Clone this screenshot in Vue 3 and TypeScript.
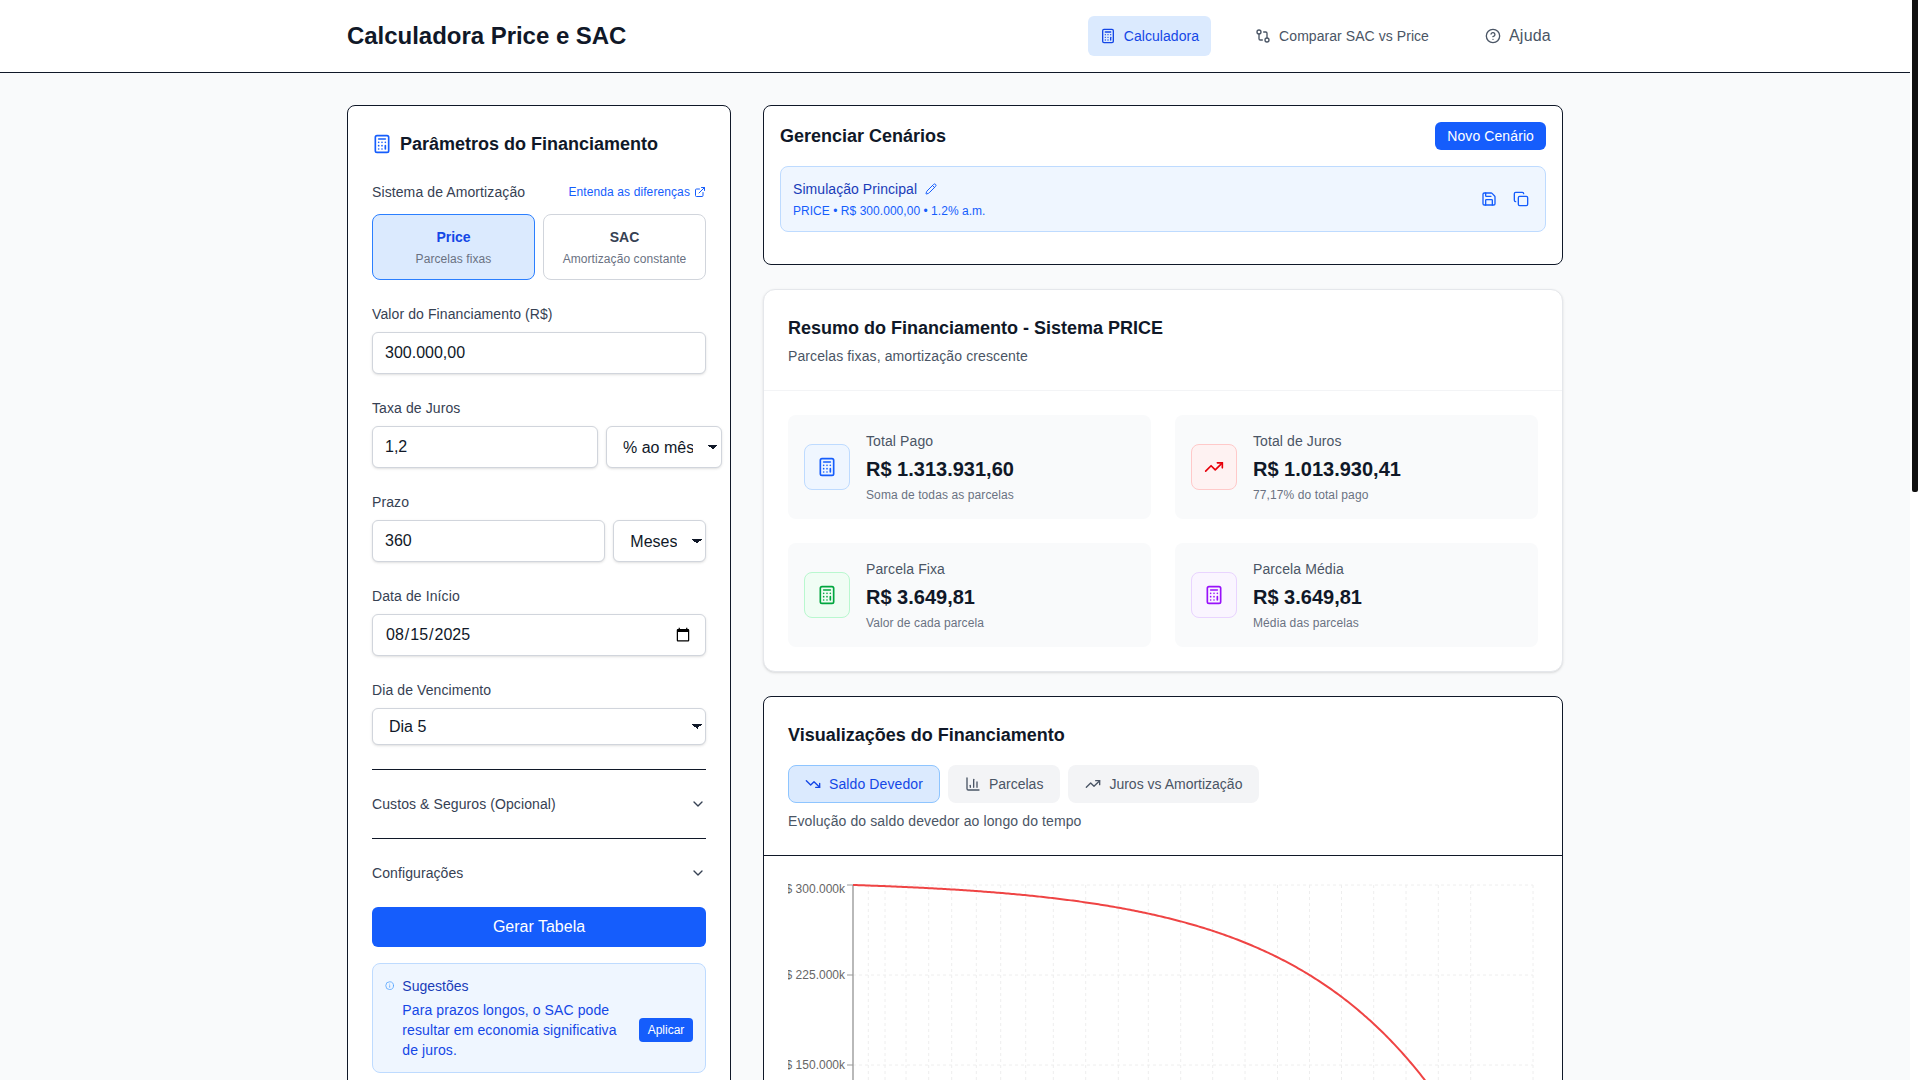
<script setup lang="ts">
import { h } from 'vue'

const icons: Record<string, string[]> = {
  calculator: [
    'M6 2h12a2 2 0 0 1 2 2v16a2 2 0 0 1-2 2H6a2 2 0 0 1-2-2V4a2 2 0 0 1 2-2z',
    'M8 6h8', 'M16 14v4', 'M16 10h.01', 'M12 10h.01', 'M8 10h.01', 'M12 14h.01', 'M8 14h.01', 'M12 18h.01', 'M8 18h.01',
  ],
  compare: [
    'M21 18a3 3 0 1 1-6 0a3 3 0 1 1 6 0z', 'M9 6a3 3 0 1 1-6 0a3 3 0 1 1 6 0z',
    'M13 6h3a2 2 0 0 1 2 2v7', 'M11 18H8a2 2 0 0 1-2-2V9',
  ],
  help: ['M22 12a10 10 0 1 1-20 0a10 10 0 1 1 20 0z', 'M9.09 9a3 3 0 0 1 5.83 1c0 2-3 3-3 3', 'M12 17h.01'],
  external: ['M15 3h6v6', 'M10 14 21 3', 'M18 13v6a2 2 0 0 1-2 2H5a2 2 0 0 1-2-2V8a2 2 0 0 1 2-2h6'],
  chevron: ['m6 9 6 6 6-6'],
  info: ['M22 12a10 10 0 1 1-20 0a10 10 0 1 1 20 0z', 'M12 16v-4', 'M12 8h.01'],
  pencil: [
    'M21.174 6.812a1 1 0 0 0-3.986-3.987L3.842 16.174a2 2 0 0 0-.5.83l-1.321 4.352a.5.5 0 0 0 .623.622l4.353-1.32a2 2 0 0 0 .83-.497z',
    'm15 5 4 4',
  ],
  save: [
    'M15.2 3a2 2 0 0 1 1.4.6l3.8 3.8a2 2 0 0 1 .6 1.4V19a2 2 0 0 1-2 2H5a2 2 0 0 1-2-2V5a2 2 0 0 1 2-2z',
    'M17 21v-7a1 1 0 0 0-1-1H8a1 1 0 0 0-1 1v7', 'M7 3v4a1 1 0 0 0 1 1h7',
  ],
  copy: [
    'M10 8h10a2 2 0 0 1 2 2v10a2 2 0 0 1-2 2H10a2 2 0 0 1-2-2V10a2 2 0 0 1 2-2z',
    'M4 16c-1.1 0-2-.9-2-2V4c0-1.1.9-2 2-2h10c1.1 0 2 .9 2 2',
  ],
  up: ['M22 7 13.5 15.5 8.5 10.5 2 17', 'M16 7h6v6'],
  down: ['M22 17 13.5 8.5 8.5 13.5 2 7', 'M16 17h6v-6'],
  bars: ['M3 3v16a2 2 0 0 0 2 2h16', 'M18 17V9', 'M13 17V5', 'M8 17v-3'],
}

const Icon = (props: { name: string; size?: number }) =>
  h(
    'svg',
    {
      width: props.size ?? 16,
      height: props.size ?? 16,
      viewBox: '0 0 24 24',
      fill: 'none',
      stroke: 'currentColor',
      'stroke-width': 2,
      'stroke-linecap': 'round',
      'stroke-linejoin': 'round',
      style: { flex: 'none', display: 'block' },
    },
    icons[props.name].map((d) => h('path', { d })),
  )
Icon.props = ['name', 'size']

const navItems = [
  { label: 'Calculadora', icon: 'calculator', active: true },
  { label: 'Comparar SAC vs Price', icon: 'compare', active: false },
  { label: 'Ajuda', icon: 'help', active: false, large: true },
]

const stats = [
  { label: 'Total Pago', value: 'R$ 1.313.931,60', note: 'Soma de todas as parcelas', icon: 'calculator', tone: 'blue' },
  { label: 'Total de Juros', value: 'R$ 1.013.930,41', note: '77,17% do total pago', icon: 'up', tone: 'red' },
  { label: 'Parcela Fixa', value: 'R$ 3.649,81', note: 'Valor de cada parcela', icon: 'calculator', tone: 'green' },
  { label: 'Parcela Média', value: 'R$ 3.649,81', note: 'Média das parcelas', icon: 'calculator', tone: 'purple' },
]

const tabs = [
  { label: 'Saldo Devedor', icon: 'down', active: true },
  { label: 'Parcelas', icon: 'bars', active: false },
  { label: 'Juros vs Amortização', icon: 'up', active: false },
]

// Chart geometry: the svg starts at the card's inner left edge.
const plotLeft = 65
const plotRight = 745
const plotTop = 5
const plotBottom = 365

const yTicks = [
  { label: 'R$ 300.000k', y: 5, base: 13 },
  { label: 'R$ 225.000k', y: 95, base: 99 },
  { label: 'R$ 150.000k', y: 185, base: 189 },
  { label: 'R$ 75.000k', y: 275, base: 279 },
  { label: 'R$ 0k', y: 365, base: 369 },
]

const gridX = [
  868.3, 885, 906, 928.7, 951.7, 976.3, 1000.7, 1025.7, 1053.3, 1085.7, 1118.3, 1148.3, 1180.7, 1212.7, 1245, 1277.5,
  1309.5, 1341.5, 1373.7, 1406, 1438.3, 1470.7, 1533,
].map((x) => x - 788)

const rate = 0.012
const months = 360
const growth = Math.pow(1 + rate, months)
const curve = Array.from({ length: months + 1 }, (_, n) => {
  const balance = (300000 * (growth - Math.pow(1 + rate, n))) / (growth - 1)
  const x = plotLeft + n * 1.847
  const y = plotBottom - (balance / 300000) * (plotBottom - plotTop)
  return `${x.toFixed(2)},${y.toFixed(2)}`
}).join(' ')
</script>

<template>
  <div class="shell">
    <div class="page">
      <header class="topbar">
        <div class="topbar-inner">
          <h1 class="brand">Calculadora Price e SAC</h1>
          <nav class="nav">
            <button
              v-for="item in navItems"
              :key="item.label"
              class="nav-item"
              :class="{ 'nav-active': item.active, 'nav-large': item.large }"
            >
              <Icon :name="item.icon" />
              <span>{{ item.label }}</span>
            </button>
          </nav>
        </div>
      </header>

      <main class="layout">
        <aside class="card params">
          <h2 class="params-title">
            <span class="title-icon"><Icon name="calculator" :size="20" /></span>
            Parâmetros do Financiamento
          </h2>

          <div class="field-head">
            <label class="label flush">Sistema de Amortização</label>
            <a class="learn">Entenda as diferenças <Icon name="external" :size="12" /></a>
          </div>
          <div class="toggle">
            <button class="toggle-item toggle-active">
              <strong>Price</strong>
              <small>Parcelas fixas</small>
            </button>
            <button class="toggle-item">
              <strong>SAC</strong>
              <small>Amortização constante</small>
            </button>
          </div>

          <div class="field">
            <label class="label">Valor do Financiamento (R$)</label>
            <input class="control wide" type="text" value="300.000,00" />
          </div>

          <div class="field">
            <label class="label">Taxa de Juros</label>
            <div class="pair">
              <input class="control rate-input" type="text" value="1,2" />
              <select class="control pick rate-select">
                <option>% ao mês</option>
                <option>% ao ano</option>
              </select>
            </div>
          </div>

          <div class="field">
            <label class="label">Prazo</label>
            <div class="pair">
              <input class="control grow" type="text" value="360" />
              <select class="control pick term-select">
                <option>Meses</option>
                <option>Anos</option>
              </select>
            </div>
          </div>

          <div class="field">
            <label class="label">Data de Início</label>
            <input class="control wide" type="date" value="2025-08-15" />
          </div>

          <div class="field">
            <label class="label">Dia de Vencimento</label>
            <select class="control wide pick short">
              <option>Dia 5</option>
              <option>Dia 10</option>
              <option>Dia 15</option>
            </select>
          </div>

          <button class="fold">
            <span>Custos &amp; Seguros (Opcional)</span>
            <Icon name="chevron" />
          </button>
          <button class="fold fold-last">
            <span>Configurações</span>
            <Icon name="chevron" />
          </button>

          <button class="primary">Gerar Tabela</button>

          <div class="hint">
            <span class="hint-icon"><Icon name="info" :size="9.33" /></span>
            <div class="hint-body">
              <div class="hint-title">Sugestões</div>
              <div class="hint-row">
                <p>Para prazos longos, o SAC pode resultar em economia significativa de juros.</p>
                <button class="apply">Aplicar</button>
              </div>
            </div>
          </div>
        </aside>

        <section class="content">
          <div class="card scenarios">
            <div class="scenarios-head">
              <h2 class="heading">Gerenciar Cenários</h2>
              <button class="new-scenario">Novo Cenário</button>
            </div>
            <div class="scenario">
              <div>
                <div class="scenario-name">
                  Simulação Principal
                  <span class="pencil"><Icon name="pencil" :size="12" /></span>
                </div>
                <div class="scenario-meta">PRICE • R$ 300.000,00 • 1.2% a.m.</div>
              </div>
              <div class="scenario-actions">
                <button class="ghost"><Icon name="save" /></button>
                <button class="ghost"><Icon name="copy" /></button>
              </div>
            </div>
          </div>

          <div class="summary">
            <div class="summary-head">
              <h2 class="heading">Resumo do Financiamento - Sistema PRICE</h2>
              <p class="muted">Parcelas fixas, amortização crescente</p>
            </div>
            <div class="stats">
              <div v-for="stat in stats" :key="stat.label" class="stat">
                <div class="stat-icon" :class="stat.tone"><Icon :name="stat.icon" :size="20" /></div>
                <div>
                  <div class="stat-label">{{ stat.label }}</div>
                  <div class="stat-value">{{ stat.value }}</div>
                  <div class="stat-note">{{ stat.note }}</div>
                </div>
              </div>
            </div>
          </div>

          <div class="card charts">
            <div class="charts-head">
              <h2 class="heading">Visualizações do Financiamento</h2>
              <div class="tabs">
                <button v-for="tab in tabs" :key="tab.label" class="tab" :class="{ 'tab-active': tab.active }">
                  <Icon :name="tab.icon" />
                  {{ tab.label }}
                </button>
              </div>
              <p class="muted">Evolução do saldo devedor ao longo do tempo</p>
            </div>
            <div class="chart-body">
              <svg class="chart" width="750" height="400" viewBox="0 0 750 400">
                <g stroke="#eeeeee" stroke-dasharray="3 3" fill="none">
                  <line v-for="t in yTicks" :key="t.label" :x1="plotLeft" :x2="plotRight" :y1="t.y" :y2="t.y" />
                  <line v-for="x in gridX" :key="x" :x1="x" :x2="x" :y1="plotTop" :y2="plotBottom" />
                </g>
                <line :x1="plotLeft" :x2="plotLeft" :y1="plotTop" :y2="plotBottom" stroke="#a8a8a8" stroke-width="1.6" />
                <line :x1="plotLeft" :x2="plotRight" :y1="plotBottom" :y2="plotBottom" stroke="#a8a8a8" stroke-width="1.6" />
                <g v-for="t in yTicks" :key="t.label">
                  <line :x1="plotLeft - 6" :x2="plotLeft" :y1="t.y" :y2="t.y" stroke="#999999" />
                  <text class="tick" :x="plotLeft - 8" :y="t.base" text-anchor="end">{{ t.label }}</text>
                </g>
                <polyline :points="curve" fill="none" stroke="#ef4444" stroke-width="2" />
              </svg>
            </div>
          </div>
        </section>
      </main>
    </div>
    <div class="scrollbar"><div class="scrollbar-thumb"></div></div>
  </div>
</template>

<style scoped>
.shell {
  display: flex;
  height: 100vh;
  overflow: hidden;
  font-family: "Liberation Sans", Arial, sans-serif;
  font-size: 16px;
  line-height: 24px;
  color: #101828;
}
.page {
  flex: 1;
  min-width: 0;
  overflow-y: auto;
  background: #f9fafb;
}
.scrollbar {
  flex: none;
  width: 10px;
  background: #ffffff;
}
.scrollbar-thumb {
  height: 492px;
  margin: 0 2px;
  background: #111111;
  border-radius: 0 0 2px 2px;
}
button,
input,
select {
  font-family: inherit;
  color: inherit;
}
button {
  border: 0;
  background: none;
  padding: 0;
  cursor: pointer;
}
h1,
h2,
p {
  margin: 0;
}

.topbar {
  background: #fff;
  border-bottom: 1px solid #101828;
}
.topbar-inner {
  max-width: 1280px;
  margin: 0 auto;
  padding: 0 32px;
  box-sizing: border-box;
  height: 72px;
  display: flex;
  align-items: center;
  justify-content: space-between;
}
.brand {
  font-size: 24px;
  line-height: 32px;
  font-weight: 700;
  letter-spacing: -0.03px;
}
.nav {
  display: flex;
  align-items: center;
  gap: 32px;
}
.nav-item {
  display: flex;
  align-items: center;
  gap: 8px;
  height: 40px;
  padding: 0 12px;
  border-radius: 6px;
  font-size: 14px;
  line-height: 20px;
  letter-spacing: 0.06px;
  color: #4a5565;
}
.nav-large {
  font-size: 16px;
  letter-spacing: 0.22px;
}
.nav-active {
  background: #dbeafe;
  color: #1447e6;
}

.layout {
  max-width: 1280px;
  margin: 0 auto;
  padding: 32px;
  box-sizing: border-box;
  display: grid;
  grid-template-columns: 384px 800px;
  gap: 32px;
  align-items: start;
}
.card {
  background: #fff;
  border: 1px solid #101828;
  border-radius: 8px;
  box-sizing: border-box;
}

.params {
  padding: 24px;
  width: 384px;
}
.params-title {
  display: flex;
  align-items: center;
  gap: 8px;
  font-size: 18px;
  line-height: 28px;
  font-weight: 700;
  margin-bottom: 24px;
}
.title-icon {
  color: #155dfc;
}
.field-head {
  display: flex;
  align-items: center;
  justify-content: space-between;
  margin-bottom: 12px;
}
.label {
  display: block;
  font-size: 14px;
  line-height: 20px;
  letter-spacing: 0.1px;
  color: #364153;
  margin-bottom: 8px;
}
.label.flush {
  margin-bottom: 0;
}
.learn {
  display: flex;
  align-items: center;
  gap: 4px;
  font-size: 12px;
  line-height: 16px;
  letter-spacing: 0.1px;
  color: #155dfc;
}
.toggle {
  display: grid;
  grid-template-columns: 1fr 1fr;
  gap: 8px;
}
.toggle-item {
  display: flex;
  flex-direction: column;
  align-items: center;
  gap: 4px;
  padding: 12px;
  border: 1px solid #d1d5dc;
  border-radius: 8px;
  color: #364153;
}
.toggle-item strong {
  font-size: 14px;
  line-height: 20px;
  font-weight: 700;
}
.toggle-item small {
  font-size: 12px;
  line-height: 16px;
  letter-spacing: 0.08px;
  color: #6a7282;
}
.toggle-active {
  background: #dbeafe;
  border-color: #2b7fff;
  color: #1447e6;
}
.field {
  margin-top: 24px;
}
.control {
  box-sizing: border-box;
  border: 1px solid #d1d5dc;
  border-radius: 6px;
  background-color: #fff;
  padding: 8px 12px;
  height: 42px;
  font-size: 16px;
  line-height: 24px;
  color: #101828;
  box-shadow: 0 1px 3px rgba(0, 0, 0, 0.1), 0 1px 2px -1px rgba(0, 0, 0, 0.1);
}
.wide {
  display: block;
  width: 100%;
}
.pair {
  display: flex;
  gap: 8px;
}
.grow {
  flex: 1;
  min-width: 0;
}
.rate-input {
  flex: none;
  width: 226px;
}
.pick {
  flex: none;
  appearance: none;
  padding: 8px 28px 8px 16px;
  line-height: normal;
  background-image: linear-gradient(45deg, transparent 50%, #101828 50%), linear-gradient(-45deg, transparent 50%, #101828 50%);
  background-size: 5px 5px, 5px 5px;
  background-position: calc(100% - 8px) 50%, calc(100% - 3px) 50%;
  background-repeat: no-repeat;
}
.rate-select {
  width: 115.7px;
}
.term-select {
  width: 92.7px;
}
.short {
  height: 37px;
}
.fold {
  display: flex;
  width: 100%;
  align-items: center;
  justify-content: space-between;
  padding: 24px 0;
  border-top: 1px solid #101828;
  font-size: 14px;
  line-height: 20px;
  letter-spacing: 0.09px;
  color: #364153;
  text-align: left;
}
.fold:first-of-type {
  margin-top: 24px;
}
.primary {
  display: block;
  width: 100%;
  height: 40px;
  border-radius: 6px;
  background: #155dfc;
  color: #fff;
  font-size: 16px;
}
.hint {
  margin-top: 16px;
  display: flex;
  gap: 8px;
  padding: 12px;
  border: 1px solid #bedbff;
  border-radius: 8px;
  background: #eff6ff;
}
.hint-icon {
  color: #51a2ff;
  padding-top: 5px;
}
.hint-body {
  flex: 1;
  min-width: 0;
}
.hint-title {
  font-size: 14px;
  line-height: 20px;
  color: #193cb8;
  margin-bottom: 4px;
}
.hint-row {
  display: flex;
  align-items: center;
  gap: 16px;
}
.hint-row p {
  flex: 1;
  font-size: 14px;
  line-height: 20px;
  letter-spacing: 0.1px;
  color: #1447e6;
}
.apply {
  flex: none;
  width: 54px;
  height: 24px;
  border-radius: 4px;
  background: #155dfc;
  color: #fff;
  font-size: 12px;
  line-height: 16px;
}

.content {
  display: flex;
  flex-direction: column;
  gap: 24px;
  min-width: 0;
}
.heading {
  font-size: 18px;
  line-height: 28px;
  font-weight: 700;
}
.muted {
  font-size: 14px;
  line-height: 20px;
  letter-spacing: 0.11px;
  color: #4a5565;
}
.scenarios {
  padding: 16px;
}
.scenarios-head {
  display: flex;
  align-items: center;
  justify-content: space-between;
  margin-bottom: 16px;
}
.new-scenario {
  height: 28px;
  padding: 0 12px;
  border-radius: 6px;
  background: #155dfc;
  color: #fff;
  font-size: 14px;
  line-height: 20px;
  letter-spacing: 0.1px;
}
.scenario {
  display: flex;
  align-items: center;
  justify-content: space-between;
  padding: 12px;
  margin-bottom: 16px;
  border: 1px solid #bedbff;
  border-radius: 8px;
  background: #eff6ff;
}
.scenario-name {
  display: flex;
  align-items: center;
  gap: 8px;
  font-size: 14px;
  line-height: 20px;
  letter-spacing: 0.06px;
  color: #193cb8;
}
.pencil {
  color: #155dfc;
}
.scenario-meta {
  margin-top: 4px;
  font-size: 12px;
  line-height: 16px;
  letter-spacing: 0.04px;
  color: #155dfc;
}
.scenario-actions {
  display: flex;
  gap: 8px;
}
.ghost {
  padding: 4px;
  color: #155dfc;
}

.summary {
  background: #fff;
  border: 1px solid #e5e7eb;
  border-radius: 12px;
  box-shadow: 0 1px 3px rgba(0, 0, 0, 0.1), 0 1px 2px -1px rgba(0, 0, 0, 0.1);
}
.summary-head {
  padding: 24px;
  border-bottom: 1px solid #f3f4f6;
}
.summary-head .heading {
  margin-bottom: 4px;
}
.stats {
  display: grid;
  grid-template-columns: 1fr 1fr;
  gap: 24px;
  padding: 24px;
}
.stat {
  display: flex;
  align-items: center;
  gap: 16px;
  padding: 16px;
  border-radius: 8px;
  background: #f9fafb;
}
.stat-icon {
  padding: 12px;
  border: 1px solid;
  border-radius: 8px;
}
.blue {
  background: #eff6ff;
  border-color: #bedbff;
  color: #155dfc;
}
.red {
  background: #fef2f2;
  border-color: #ffc9c9;
  color: #e7000b;
}
.green {
  background: #f0fdf4;
  border-color: #b9f8cf;
  color: #00a63e;
}
.purple {
  background: #faf5ff;
  border-color: #e9d4ff;
  color: #9810fa;
}
.stat-label {
  font-size: 14px;
  line-height: 20px;
  letter-spacing: 0.1px;
  color: #4a5565;
}
.stat-value {
  margin-top: 4px;
  font-size: 20px;
  line-height: 28px;
  font-weight: 700;
}
.stat-note {
  margin-top: 4px;
  font-size: 12px;
  line-height: 16px;
  letter-spacing: 0.1px;
  color: #6a7282;
}

.charts-head {
  padding: 24px;
  border-bottom: 1px solid #101828;
}
.tabs {
  display: flex;
  gap: 8px;
  margin: 16px 0 8px;
}
.tab {
  display: flex;
  align-items: center;
  gap: 8px;
  padding: 8px 16px;
  border: 1px solid transparent;
  border-radius: 8px;
  background: #f3f4f6;
  color: #4a5565;
  font-size: 14px;
  line-height: 20px;
}
.tab-active {
  background: #dbeafe;
  border-color: #8ec5ff;
  color: #1447e6;
  letter-spacing: 0.1px;
}
.chart-body {
  padding: 24px;
}
.chart {
  display: block;
}
.tick {
  font-size: 12px;
  fill: #666666;
}
</style>

<style>
html,
body {
  margin: 0;
  height: 100%;
  overflow: hidden;
  background: #f9fafb;
}
</style>
